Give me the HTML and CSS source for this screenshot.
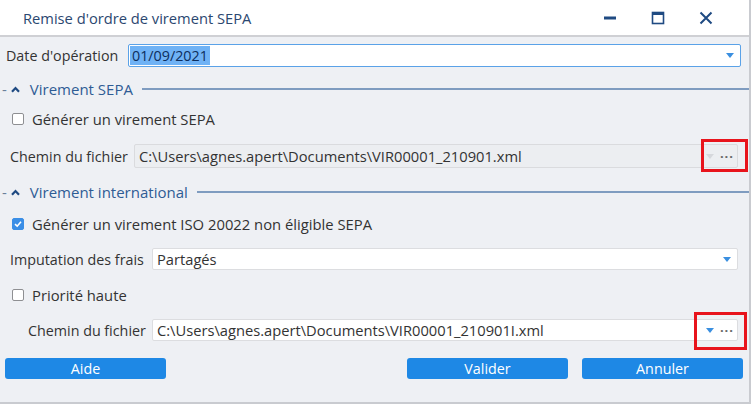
FILE: index.html
```html
<!DOCTYPE html>
<html lang="fr">

<head>
    <meta charset="UTF-8">
    <title>Remise d'ordre de virement SEPA</title>
    <link rel="stylesheet" href="styles.css">
</head>

<body>
    <div class="dialog">
        <!-- Title bar -->
        <div class="titlebar">
            <span class="title">Remise d'ordre de virement SEPA</span>
            <div class="win-buttons">
                <svg width="14" height="14" viewBox="0 0 14 14"><rect x="1" y="5.5" width="12" height="3" fill="#1f4a82"/></svg>
                <svg width="14" height="14" viewBox="0 0 14 14"><rect x="1.5" y="1.5" width="11" height="11" fill="none" stroke="#1f4a82" stroke-width="1.6"/><rect x="1.5" y="1.5" width="11" height="2.5" fill="#1f4a82"/></svg>
                <svg width="14" height="14" viewBox="0 0 14 14"><path d="M1.5 1.5 L12.5 12.5 M12.5 1.5 L1.5 12.5" stroke="#1f4a82" stroke-width="2"/></svg>
            </div>
        </div>

        <div class="content">
            <!-- Date -->
            <div class="row row-date">
                <label class="lbl">Date d'opération</label>
                <div class="input input-focus">
                    <span class="selected">01/09/2021</span>
                    <span class="arrow"></span>
                </div>
            </div>

            <!-- Virement SEPA -->
            <div class="section sec-1">
                <span class="sec-dash">-</span>
                <svg class="caret" width="9" height="7" viewBox="0 0 9 7"><path d="M1 5.8 L4.5 2 L8 5.8" fill="none" stroke="#1f4a82" stroke-width="2.2"/></svg>
                <span class="sec-title">Virement SEPA</span>
                <span class="sec-line"></span>
            </div>

            <div class="check check-1">
                <span class="box"></span>
                <span>Générer un virement SEPA</span>
            </div>

            <div class="row row-path1">
                <label class="lbl lbl-path1">Chemin du fichier</label>
                <div class="input input-disabled">
                    <span class="val">C:\Users\agnes.apert\Documents\VIR00001_210901.xml</span>
                    <span class="arrow arrow-off"></span>
                    <span class="dots">···</span>
                    <span class="mark mark-1"></span>
                </div>
            </div>

            <!-- Virement international -->
            <div class="section sec-2">
                <span class="sec-dash">-</span>
                <svg class="caret" width="9" height="7" viewBox="0 0 9 7"><path d="M1 5.8 L4.5 2 L8 5.8" fill="none" stroke="#1f4a82" stroke-width="2.2"/></svg>
                <span class="sec-title">Virement international</span>
                <span class="sec-line"></span>
            </div>

            <div class="check check-2">
                <span class="box box-on">
                    <svg width="10" height="10" viewBox="0 0 10 10"><path d="M2 5.2 L4.2 7.2 L8 2.8" fill="none" stroke="#fff" stroke-width="1.6"/></svg>
                </span>
                <span>Générer un virement ISO 20022 non éligible SEPA</span>
            </div>

            <div class="row row-frais">
                <label class="lbl">Imputation des frais</label>
                <div class="input">
                    <span class="val">Partagés</span>
                    <span class="arrow"></span>
                </div>
            </div>

            <div class="check check-3">
                <span class="box"></span>
                <span>Priorité haute</span>
            </div>

            <div class="row row-path2">
                <label class="lbl lbl-path2">Chemin du fichier</label>
                <div class="input">
                    <span class="val">C:\Users\agnes.apert\Documents\VIR00001_210901I.xml</span>
                    <span class="arrow"></span>
                    <span class="dots">···</span>
                    <span class="mark mark-2"></span>
                </div>
            </div>

            <!-- Buttons -->
            <div class="buttons">
                <button class="btn btn-aide">Aide</button>
                <span class="spacer"></span>
                <button class="btn">Valider</button>
                <button class="btn btn-last">Annuler</button>
            </div>
        </div>
    </div>
</body>

</html>
```

FILE: styles.css
```css
/* Dialog */
body {
    margin: 0;
    padding: 0;
    background-color: #fff;
    font-family: "Open Sans", "Noto Sans", sans-serif;
    font-size: 14.3px;
    color: #333;
}
.dialog {
    width: 749px;
    height: 402px;
    background-color: #eef0f4;
    border-right: 2px solid #c9cbd0;
    border-bottom: 2px solid #c9cbd0;
    display: flex;
    flex-direction: column;
}
.titlebar {
    height: 35px;
    background-color: #fff;
    border-bottom: 2px solid #cfd0d4;
    display: flex;
    align-items: center;
}
.title {
    margin-left: 23px;
    font-size: 14.7px;
    color: #2b4770;
}
.win-buttons {
    margin-left: auto;
    margin-right: 36px;
    display: flex;
    gap: 34px;
}
.content {
    display: flex;
    flex-direction: column;
}

/* Rows */
.row {
    display: flex;
    align-items: center;
}
.lbl {
    white-space: nowrap;
}
.row-date {
    height: 23px;
    margin-top: 7px;
    padding-left: 6px;
}
.row-date .lbl {
    width: 122px;
}
.row-date .input {
    width: 613px;
}
.row-path1 {
    height: 24px;
    margin-top: 17px;
}
.lbl-path1 {
    margin-left: 10px;
    width: 124px;
}
.row-path1 .input {
    width: 604px;
}
.row-frais {
    height: 22px;
    margin-top: 16px;
}
.row-frais .lbl {
    margin-left: 10px;
    width: 142px;
}
.row-frais .input {
    width: 586px;
}
.row-path2 {
    height: 22px;
    margin-top: 16px;
}
.lbl-path2 {
    margin-left: 28px;
    width: 124px;
}
.row-path2 .input {
    width: 586px;
}

/* Inputs */
.input {
    position: relative;
    height: 100%;
    box-sizing: border-box;
    background-color: #fff;
    border: 1px solid #dcdde0;
    border-radius: 2px;
    display: flex;
    align-items: center;
    padding-left: 4px;
}
.input-focus {
    border-color: #5aa2e8;
    padding-left: 1px;
}
.input-disabled {
    background-color: #eceef1;
    border-color: #dadbde;
}
.selected {
    background-color: #6fb2f5;
    color: #0c2d5c;
    padding: 0 2px;
    font-size: 14.3px;
    line-height: 19px;
}
.val {
    color: #333;
    white-space: nowrap;
    font-size: 14.7px;
}
.arrow {
    margin-left: auto;
    margin-right: 6px;
    width: 0;
    height: 0;
    border-left: 4px solid transparent;
    border-right: 4px solid transparent;
    border-top: 5px solid #3a8fe0;
}
.arrow-off {
    border-top-color: #d6d8dc;
}
.dots {
    margin-right: 3px;
    color: #666;
    font-size: 13px;
    letter-spacing: 1px;
    font-weight: bold;
}

/* Red annotation frames */
.mark {
    position: absolute;
    border: 3px solid #e8141c;
    box-sizing: border-box;
    pointer-events: none;
}
.mark-1 {
    left: 566px;
    top: -6px;
    width: 47px;
    height: 33px;
}
.mark-2 {
    left: 541px;
    top: -8px;
    width: 53px;
    height: 38px;
}

/* Sections */
.section {
    height: 16px;
    display: flex;
    align-items: center;
    color: #2f5c94;
    font-size: 15px;
}
.sec-1 {
    margin-top: 14px;
}
.sec-2 {
    margin-top: 16px;
}
.sec-dash {
    margin-left: 2px;
    color: #6a7f99;
}
.caret {
    margin-left: 4px;
}
.sec-title {
    margin-left: 10px;
    white-space: nowrap;
}
.sec-line {
    flex: 1;
    height: 2px;
    background-color: #7f9cc0;
    margin-left: 9px;
}

/* Checkboxes */
.check {
    height: 16px;
    display: flex;
    align-items: center;
    padding-left: 12px;
    font-size: 14.8px;
}
.check-1 {
    margin-top: 14px;
}
.check-2 {
    margin-top: 16px;
}
.check-3 {
    margin-top: 17px;
}
.box {
    width: 12px;
    height: 12px;
    box-sizing: border-box;
    border: 1px solid #8e8f92;
    border-radius: 2px;
    background-color: #fff;
    margin-right: 8px;
    display: flex;
    align-items: center;
    justify-content: center;
}
.box-on {
    background-color: #3a8ee6;
    border-color: #3a8ee6;
}

/* Buttons */
.buttons {
    display: flex;
    margin-top: 17px;
    padding-left: 5px;
}
.btn {
    width: 161px;
    height: 21px;
    border: none;
    border-radius: 3px;
    background-color: #1e88e5;
    color: #fff;
    font-family: "Open Sans", "Noto Sans", sans-serif;
    font-size: 14.3px;
    padding: 0;
}
.spacer {
    flex: 1;
}
.btn-last {
    margin-left: 14px;
    margin-right: 6px;
}
```
